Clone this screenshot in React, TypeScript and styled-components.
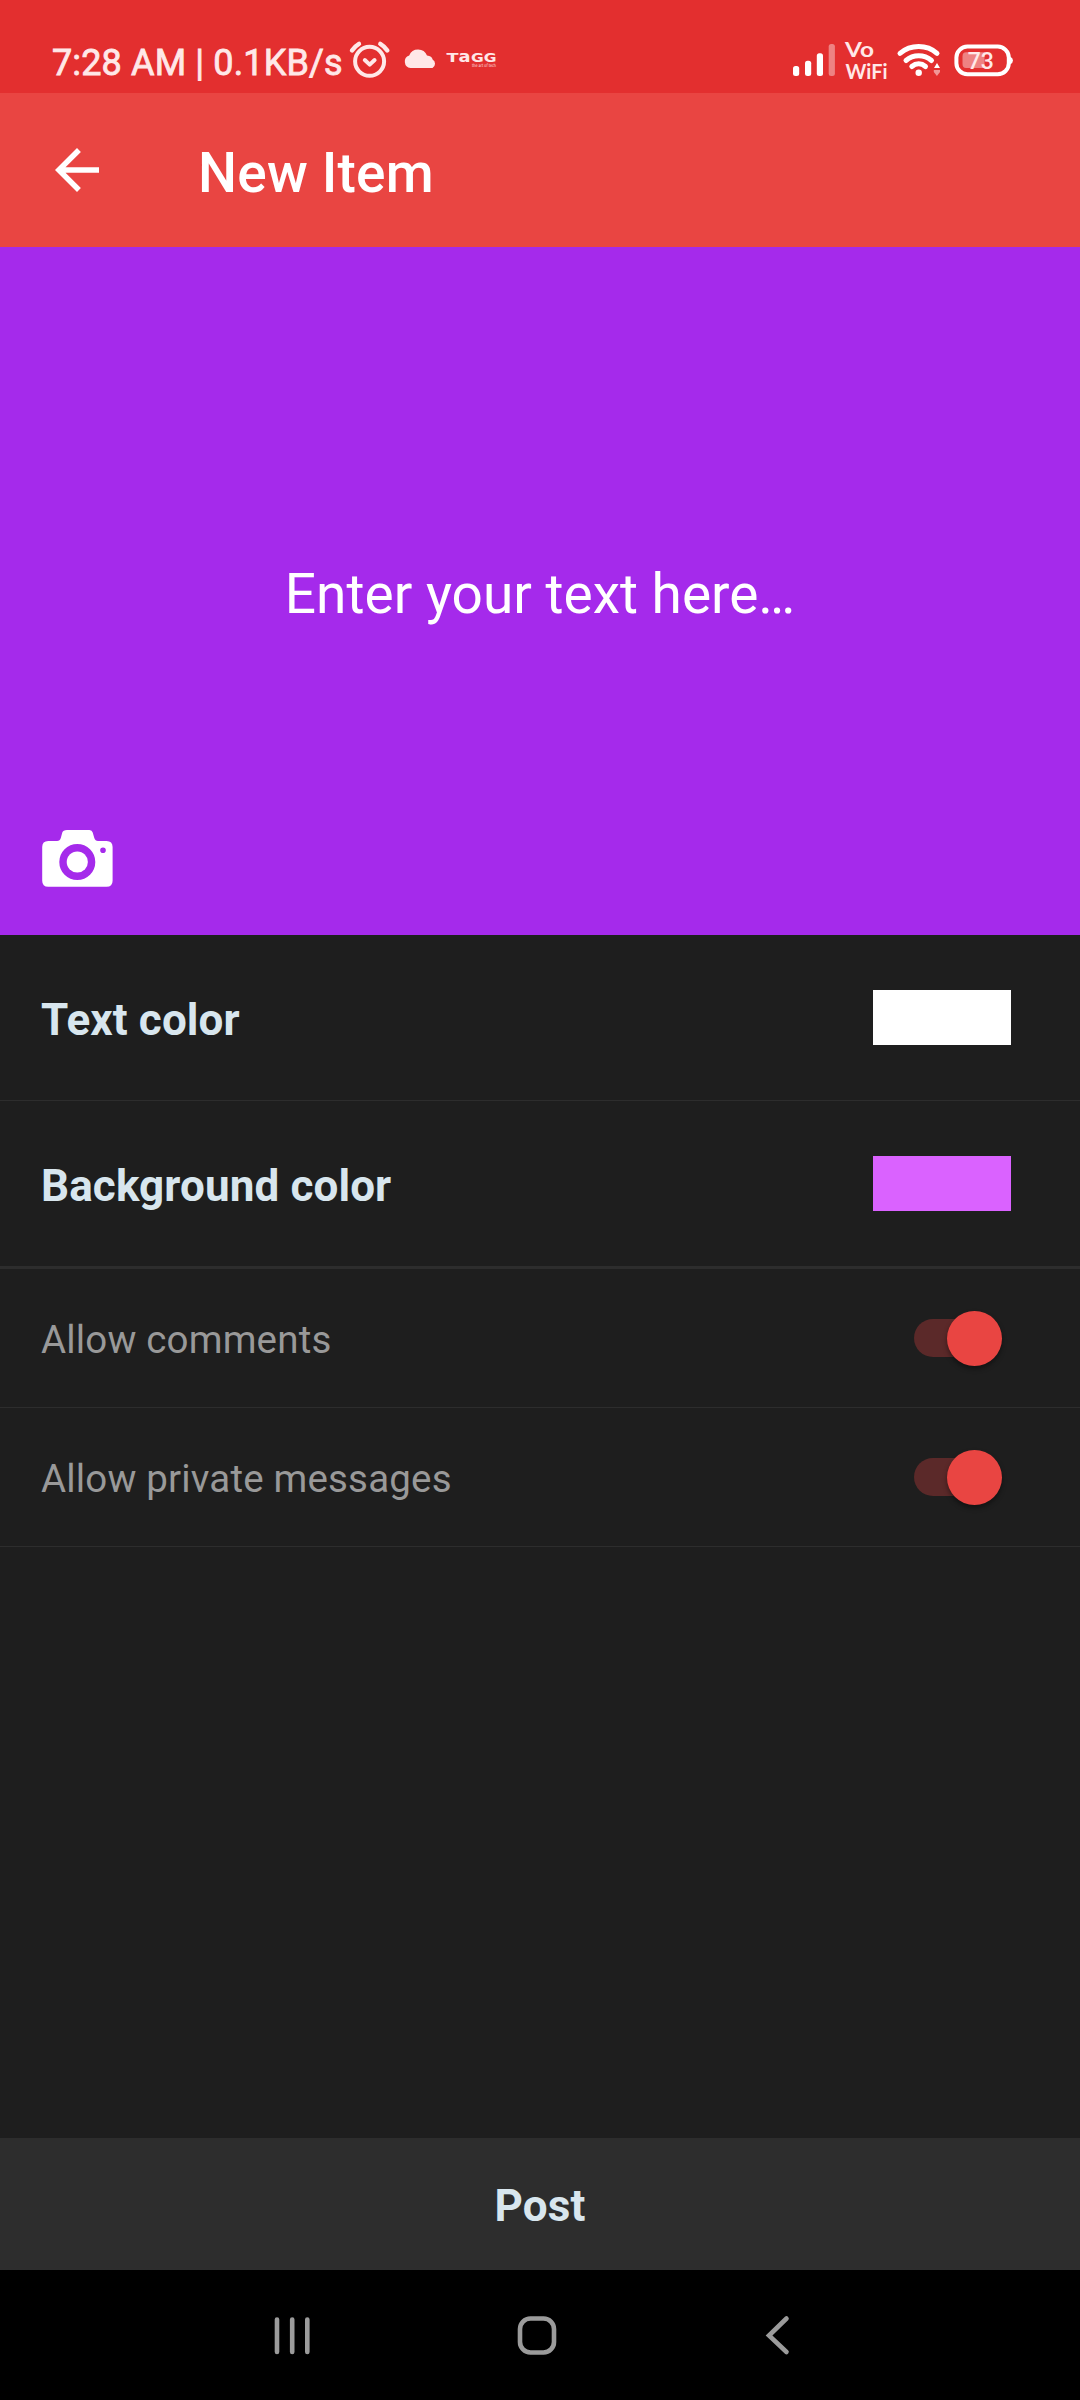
import React, { useState } from "react";
import styled, { createGlobalStyle } from "styled-components";

const Global = createGlobalStyle`
  * { box-sizing: border-box; }
  body { margin: 0; background: #1e1e1e; }
`;

const Screen = styled.div`
  width: 1080px;
  height: 2400px;
  display: flex;
  flex-direction: column;
  background: #1e1e1e;
  font-family: Roboto, "Liberation Sans", sans-serif;
  overflow: hidden;
`;

const StatusBar = styled.header`
  height: 93px;
  flex: none;
  display: flex;
  justify-content: space-between;
  padding: 0 67px 0 51px;
  background: #e32f2f;
  color: #ffe8e8;
`;

const StatusGroup = styled.div`
  display: flex;
  align-items: flex-start;
`;

const Clock = styled.span`
  width: 293px;
  padding: 42px 0 0 1px;
  font-size: 36px;
  line-height: 42px;
  letter-spacing: 0.14px;
  white-space: nowrap;
  -webkit-text-stroke: 0.8px currentColor;
`;

const StatusGlyph = styled.svg<{ $left?: number }>`
  display: block;
  height: 93px;
  flex: none;
  overflow: visible;
  margin-left: ${(p) => p.$left ?? 0}px;
`;

const AppBar = styled.div`
  height: 154px;
  flex: none;
  display: flex;
  align-items: center;
  padding-left: 44px;
  background: #e94542;
  color: #fff;
`;

const BackButton = styled.button`
  width: 66px;
  height: 66px;
  padding: 0;
  border: 0;
  background: none;
  color: inherit;
`;

const Title = styled.h1`
  margin: 0 0 0 88px;
  padding-top: 6px;
  font-size: 55px;
  line-height: 64px;
  font-weight: 500;
  letter-spacing: 0.2px;
`;

const Composer = styled.section`
  height: 688px;
  flex: none;
  display: grid;
  grid-template-rows: 1fr 64px 1fr;
  justify-items: center;
  padding-top: 6px;
  background: #a52aeb;
  color: #fff;
`;

const Placeholder = styled.p`
  grid-row: 2;
  margin: 0;
  font-size: 55px;
  line-height: 64px;
`;

const CameraButton = styled.button`
  grid-row: 3;
  justify-self: start;
  align-self: end;
  width: 72px;
  height: 58px;
  margin: 0 0 47px 42px;
  padding: 0;
  border: 0;
  background: none;
`;

const Row = styled.div<{ $height: number; $line: number }>`
  height: ${(p) => p.$height}px;
  flex: none;
  display: flex;
  align-items: center;
  justify-content: space-between;
  padding: 0 69px 0 41px;
  border-bottom: ${(p) => p.$line}px solid #2d2d2d;
`;

const ColorLabel = styled.span`
  padding-top: 5px;
  color: #d8e6ee;
  font-size: 44px;
  line-height: 52px;
  font-weight: 700;
  letter-spacing: 0.12px;
`;

const OptionLabel = styled.span`
  padding-top: 3px;
  color: #999;
  font-size: 38.5px;
  line-height: 46px;
  letter-spacing: 0.17px;
`;

const Swatch = styled.div<{ $color: string }>`
  width: 138px;
  height: 55px;
  background: ${(p) => p.$color};
`;

const Track = styled.button<{ $on: boolean }>`
  width: 82px;
  height: 38px;
  margin-right: 15px;
  padding: 0;
  border: 0;
  border-radius: 19px;
  display: flex;
  align-items: center;
  justify-content: ${(p) => (p.$on ? "flex-end" : "flex-start")};
  background: ${(p) => (p.$on ? "#5b2929" : "#555")};
`;

const Thumb = styled.span<{ $on: boolean }>`
  width: 55px;
  height: 55px;
  flex: none;
  margin-right: -6px;
  border-radius: 50%;
  background: ${(p) => (p.$on ? "#e94542" : "#bbb")};
  box-shadow: 0 3px 5px rgba(0, 0, 0, 0.4);
`;

const Spacer = styled.div`
  flex: 1;
`;

const PostButton = styled.button`
  height: 132px;
  flex: none;
  padding: 4px 0 0;
  border: 0;
  background: #2d2d2d;
  color: #d8e6ee;
  font-family: inherit;
  font-size: 44px;
  line-height: 52px;
  font-weight: 700;
  letter-spacing: 0.15px;
`;

const NavBar = styled.nav`
  height: 130px;
  flex: none;
  display: flex;
  align-items: center;
  padding-left: 270px;
  background: #000;
`;

const NavIcon = styled.svg<{ $left?: number }>`
  width: 44px;
  height: 44px;
  margin-left: ${(p) => p.$left ?? 0}px;
  fill: none;
  stroke: #9b9b9b;
  stroke-width: 4.6;
  stroke-linecap: round;
`;

function Toggle() {
  const [on, setOn] = useState(true);
  return (
    <Track $on={on} role="switch" aria-checked={on} onClick={() => setOn(!on)}>
      <Thumb $on={on} />
    </Track>
  );
}

function Status() {
  return (
    <StatusBar>
      <StatusGroup>
        <Clock>7:28 AM | 0.1KB/s</Clock>
        <StatusGlyph $left={3} width="45" viewBox="347 0 45 93" fill="none" stroke="currentColor" strokeLinecap="round" strokeLinejoin="round">
          <circle cx="369.6" cy="61.3" r="14.5" strokeWidth="4" />
          <path d="M364.800 60l4.900 4.600 4.900-4.600" strokeWidth="4" />
          <path d="M352 50.5q2.600-4 7-6.600M387.300 50.500q-2.600-4-7-6.600" strokeWidth="4.400" />
        </StatusGlyph>
        <StatusGlyph $left={12} width="34" viewBox="404 0 34 93" fill="currentColor">
          <path d="M410.500 68a6.500 6.500 0 0 1-1.300-12.600A9.600 9.600 0 0 1 427 55.600Q432 56 432.600 59.600A4.800 4.800 0 0 1 432.500 68Z" />
        </StatusGlyph>
        <StatusGlyph $left={8} width="64" viewBox="446 0 64 93" fill="currentColor" fontFamily="'DejaVu Sans', sans-serif">
          <text y="62.300" fontSize="12.800" fontWeight="700">
            <tspan x="446.500" textLength="12" lengthAdjust="spacingAndGlyphs">T</tspan>
            <tspan x="458.500" fontSize="16.500" textLength="12" lengthAdjust="spacingAndGlyphs">a</tspan>
            <tspan x="471" textLength="25.500" lengthAdjust="spacingAndGlyphs">GG</tspan>
          </text>
          <text x="472" y="67.300" fontSize="4.500" textLength="24" lengthAdjust="spacingAndGlyphs">the art of tech</text>
        </StatusGlyph>
      </StatusGroup>
      <StatusGroup>
        <StatusGlyph width="44" viewBox="792 0 44 93" fill="#fff">
          <rect x="793" y="66" width="6.200" height="10" rx="2.500" />
          <rect x="805" y="60.700" width="6.200" height="15.300" rx="2.500" />
          <rect x="816.800" y="53.300" width="6.200" height="22.700" rx="2.500" />
          <rect x="828.700" y="44" width="6.200" height="32" rx="2.500" opacity="0.4" />
        </StatusGlyph>
        <StatusGlyph
          $left={8}
          width="50"
          viewBox="844 0 50 93"
          fill="currentColor"
          fontFamily="Lato, Roboto, sans-serif"
          fontWeight="700"
          fontSize="21.500"
        >
          <text x="845" y="57" textLength="29" lengthAdjust="spacingAndGlyphs">Vo</text>
          <text x="845.500" y="78.800" textLength="42" lengthAdjust="spacingAndGlyphs">WiFi</text>
        </StatusGlyph>
        <StatusGlyph $left={2} width="46" viewBox="896 0 46 93" fill="none" stroke="#fff" strokeLinecap="round">
          <path d="M900 53.300Q908 46.500 918.700 46.500T937 53.300" strokeWidth="5" />
          <path d="M906 60.500Q911.500 55.800 918.700 55.800T931.500 60.500" strokeWidth="5" />
          <path d="M911.800 66.500Q915 63.800 918.700 63.800T925.500 66.500" strokeWidth="5" />
          <circle cx="918.700" cy="72.800" r="3.200" fill="#fff" stroke="none" />
          <path d="M937 63l3 5h-6z" fill="#fff" stroke="none" />
          <path d="M933.800 70h6.200v2l-3.100 4-3.100-4z" fill="#fff" stroke="none" opacity="0.5" />
        </StatusGlyph>
        <StatusGlyph $left={11} width="60" viewBox="953 0 60 93">
          <rect x="956.400" y="46.600" width="52.400" height="27.600" rx="11" fill="none" stroke="#fff" strokeWidth="4" />
          <path d="M1010 56.500q3 1.500 3 4t-3 4z" fill="#fff" />
          <path d="M966 52.300h18.500v15.700H966q-3.500 0-3.500-4v-7.700q0-4 3.500-4z" fill="#fff" opacity="0.4" />
          <text x="980.800" y="69" textAnchor="middle" fontFamily="Roboto, sans-serif" fontWeight="500" fontSize="23" fill="#ffe8e8">73</text>
        </StatusGlyph>
      </StatusGroup>
    </StatusBar>
  );
}

export default function App() {
  return (
    <Screen>
      <Global />
      <Status />
      <AppBar>
        <BackButton aria-label="Back">
          <svg width="66" height="66" viewBox="0 0 24 24" fill="currentColor">
            <path d="M20 11H7.830l5.590-5.590L12 4l-8 8 8 8 1.410-1.410L7.830 13H20v-2z" />
          </svg>
        </BackButton>
        <Title>New Item</Title>
      </AppBar>
      <Composer>
        <Placeholder>Enter your text here…</Placeholder>
        <CameraButton aria-label="Add photo">
          <svg width="72" height="58" viewBox="42 830 72 58" fill="#fff">
            <path
              fillRule="evenodd"
              d="M67 830H89.500Q92 830 92.700 832.500L94.300 838Q95.200 841 98 841H106.500Q112.600 841 112.600 847V880.800Q112.600 886.800 106.500 886.800H48.300Q42.200 886.800 42.200 880.800V847Q42.200 841 48.300 841H57Q60 841 60.800 838L62.300 832.500Q63 830 67 830ZM77.300 844a18 18 0 1 0 0 36a18 18 0 1 0 0-36ZM103 847.500a2.800 2.800 0 1 0 0 5.600a2.800 2.800 0 1 0 0-5.600Z"
            />
            <circle cx="77.300" cy="862" r="10.600" />
          </svg>
        </CameraButton>
      </Composer>
      <Row $height={166} $line={1}>
        <ColorLabel>Text color</ColorLabel>
        <Swatch $color="#ffffff" />
      </Row>
      <Row $height={168} $line={3}>
        <ColorLabel>Background color</ColorLabel>
        <Swatch $color="#da62ff" />
      </Row>
      <Row $height={139} $line={1}>
        <OptionLabel>Allow comments</OptionLabel>
        <Toggle />
      </Row>
      <Row $height={139} $line={1}>
        <OptionLabel>Allow private messages</OptionLabel>
        <Toggle />
      </Row>
      <Spacer />
      <PostButton>Post</PostButton>
      <NavBar>
        <NavIcon viewBox="270 2313 44 44">
          <path d="M277 2319.500v32.500M292.200 2319.500v32.500M307.300 2319.500v32.500" />
        </NavIcon>
        <NavIcon $left={201} viewBox="515 2313 44 44">
          <rect x="520" y="2318.500" width="34" height="34" rx="10.500" />
        </NavIcon>
        <NavIcon $left={197} viewBox="756 2313 44 44">
          <path d="M786.500 2318.500L769 2335.500L786.500 2352" />
        </NavIcon>
      </NavBar>
    </Screen>
  );
}
